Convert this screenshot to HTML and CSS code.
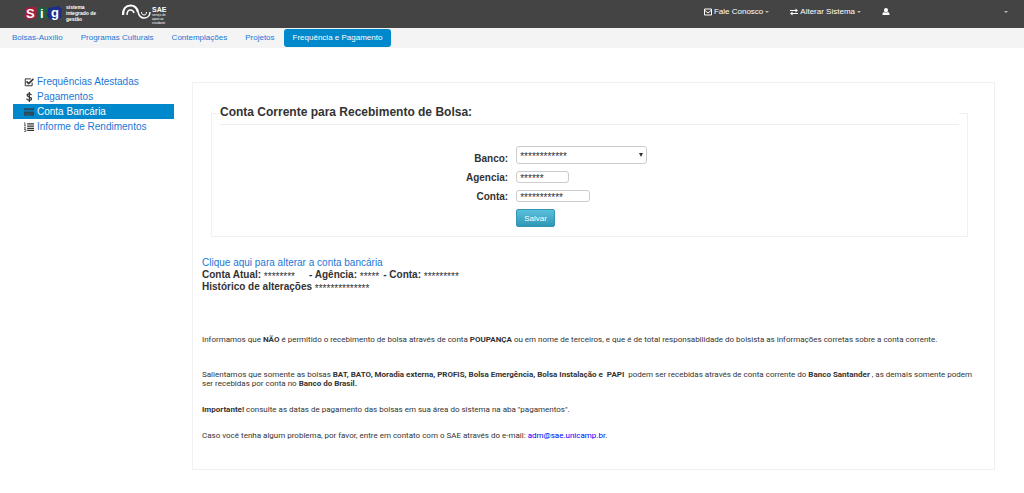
FILE: index.html
```html
<!DOCTYPE html>
<html lang="pt-BR">
<head>
<meta charset="utf-8">
<title>SIG - Conta Bancária</title>
<link rel="stylesheet" href="styles.css">
</head>
<body>
<header class="topbar">
  <a class="brand" href="#">
    <svg class="brand-sig" viewBox="0 0 38 18" role="img" aria-label="SIG">
      <path fill="#a81c3c" d="M1 4L12 2.500l1 4-1 4 1 3-9 2.500L0 12l2-3z"/>
      <path fill="#19633c" d="M13 4l9-1 1 4-1 3 1 4-9 1.500 1-5z"/>
      <path fill="#1c2f8c" d="M24 4l11-2 3 3-1 4 1 4-5 3-8-1-2-4 1-3z"/>
      <text class="sig-letter" x="2" y="14">S</text>
      <text class="sig-letter" x="16" y="14">i</text>
      <text class="sig-letter" x="27" y="13">g</text>
    </svg>
    <span class="brand-text">sistema<br>integrado de<br>gestão</span>
  </a>
  <a class="brand brand-unit" href="#">
    <svg class="brand-sae" viewBox="0 0 30 16" role="img" aria-label="Ondas SAE">
      <g fill="none" stroke="#fff">
        <path stroke-width="2.200" d="M1 11C1 5 4 1.500 8.500 1.500S15 4 16 8"/>
        <path stroke-width="1.500" d="M16 8c1 4 3 6 6 6s6-2 6-6"/>
        <path stroke-width="1.500" d="M5 11C5 7.500 6.500 6 8.500 6s3 1 3.500 3"/>
        <path d="M19.500 8c0 2 1 3 2.500 3s2.500-1 2.500-3"/>
      </g>
    </svg>
    <span class="sae-text"><strong>SAE</strong><small>serviço de<br>apoio ao<br>estudante</small></span>
  </a>
  <nav class="usernav" aria-label="Usuário">
    <a href="#"><svg class="ico" viewBox="0 0 16 16"><path fill="none" stroke="#fff" stroke-width="2" d="M1 2h14v12H1zM2 5l6 5 6-5"/></svg><span>Fale Conosco</span><i class="caret"></i></a>
    <a href="#"><svg class="ico" viewBox="0 0 16 16"><path fill="#fff" d="M0 4h11V1l5 4-5 4V6H0zM16 10H5V7l-5 4 5 4v-3h11z"/></svg><span>Alterar Sistema</span><i class="caret"></i></a>
    <a class="account" href="#" aria-label="Minha conta"><svg class="ico" viewBox="0 0 16 16"><path fill="#fff" d="M8 0c3 0 4 2 4 4.500S10.500 9 8 9 4 7 4 4.500 5 0 8 0zM4 8c1 2 7 2 8 0 3 1 3 4 3 6H1c0-2 0-5 3-6z"/></svg><i class="caret"></i></a>
  </nav>
</header>
<nav class="tabs" aria-label="Principal">
  <a href="#">Bolsas-Auxílio</a>
  <a href="#">Programas Culturais</a>
  <a href="#">Contemplações</a>
  <a href="#">Projetos</a>
  <a class="active" href="#" aria-current="page">Frequência e Pagamento</a>
</nav>
<div class="layout">
  <nav class="side" aria-label="Frequência e Pagamento">
    <a href="#"><svg class="side-ico" viewBox="0 0 16 16"><path fill="none" stroke="#333" stroke-width="1.600" d="M13 9v5H2V3h9"/><path fill="none" stroke="#333" stroke-width="2.600" d="M4 7l3.500 3.500L15 3"/></svg>Frequências Atestadas</a>
    <a href="#"><svg class="side-ico" viewBox="0 0 16 16"><path fill="none" stroke="#333" stroke-width="2" d="M12 5C11 2.500 5 2 5 5c0 3.500 7 2 7 6 0 3-7 3-8-.5M8.500 0v16"/></svg>Pagamentos</a>
    <a class="active" href="#" aria-current="page"><svg class="side-ico" viewBox="0 0 16 16"><path fill="#2d4a5c" d="M0 2h16v3H0zM0 7h16v7H0z"/><path stroke="#0088cc" d="M2 11.500h2M5 11.500h4"/></svg>Conta Bancária</a>
    <a href="#"><svg class="side-ico" viewBox="0 0 16 16"><path fill="none" stroke="#333" stroke-width="2" d="M5 3h11M5 6.500h11M5 10h11M5 13.500h11"/><path fill="none" stroke="#333" stroke-width="1.200" d="M0 1.500h1.500V6M0 6h3M0 9h2.500L.5 12H3v3H0"/></svg>Informe de Rendimentos</a>
  </nav>
  <main class="card">
    <form>
      <fieldset class="account-form">
        <legend>Conta Corrente para Recebimento de Bolsa:</legend>
        <div class="fields">
          <label for="banco">Banco:</label>
          <span class="select"><select id="banco"><option>************</option></select></span>
          <label for="agencia">Agencia:</label>
          <input class="short" id="agencia" type="text" value="******">
          <label for="conta">Conta:</label>
          <input class="medium" id="conta" type="text" value="***********">
          <button type="submit">Salvar</button>
        </div>
      </fieldset>
    </form>
    <section class="summary">
      <a href="#">Clique aqui para alterar a conta bancária</a>
      <div class="current"><span>Conta Atual: <b class="mask">********</b></span><span>- Agência: <b class="mask">*****</b></span><span>- Conta: <b class="mask">*********</b></span></div>
      <div>Histórico de alterações <b class="mask">**************</b></div>
    </section>
    <section class="notes">
      <p class="lead">Informamos que <strong>NÃO</strong> é permitido o recebimento de bolsa através de conta <strong>POUPANÇA</strong> ou em nome de terceiros, e que é de total responsabilidade do bolsista as informações corretas sobre a conta corrente.</p>
      <p>Salientamos que somente as bolsas <strong>BAT, BATO, Moradia externa, PROFIS, Bolsa Emergência, Bolsa Instalação e &nbsp;PAPI</strong> &nbsp;podem ser recebidas através de conta corrente do <strong>Banco Santander</strong> , as demais somente podem ser recebidas por conta no <strong>Banco do Brasil.</strong></p>
      <p><strong>Importante!</strong> consulte as datas de pagamento das bolsas em sua área do sistema na aba "pagamentos".</p>
      <p>Caso você tenha algum problema, por favor, entre em contato com o SAE através do e-mail: <a href="mailto:adm@sae.unicamp.br">adm@sae.unicamp.br</a>.</p>
    </section>
  </main>
</div>
</body>
</html>
```
FILE: styles.css
```css
* { box-sizing: border-box; }
body {
  margin: 0;
  background: #fff;
  color: #333;
  font: 10px/12px "Liberation Sans", Arial, sans-serif;
}
a { color: #1a78d6; text-decoration: none; }

.topbar {
  display: flex;
  align-items: flex-start;
  gap: 26px;
  height: 28px;
  padding: 4px 16px 0 24px;
  background: #444;
}
.brand { display: flex; gap: 4px; color: #fff; }
.brand-unit { gap: 0; }
.brand-sig { width: 38px; height: 18px; }
.sig-letter { fill: #fff; font-size: 13px; font-weight: bold; }
.brand-text { font-size: 5px; line-height: 6px; font-weight: bold; }
.brand-sae { width: 30px; height: 16px; }
.sae-text { display: grid; align-content: start; padding-top: 3px; }
.sae-text strong { font-size: 7px; line-height: 6px; }
.sae-text small { font-size: 3px; line-height: 4px; }

.usernav { display: flex; gap: 21px; margin-left: auto; padding-top: 2px; }
.usernav a {
  display: flex;
  align-items: center;
  gap: 2px;
  color: #fff;
  font-size: 8px;
}
.usernav .account { width: 126px; justify-content: space-between; }
.ico { width: 8px; height: 8px; }
.caret {
  border: 2px solid transparent;
  border-top-color: #bbb;
  border-bottom: 0;
}

.tabs {
  display: flex;
  align-items: center;
  height: 20px;
  padding: 0 3px;
  background: #f4f4f4;
}
.tabs a { padding: 0 9px; font-size: 8px; line-height: 18px; }
.tabs .active { border-radius: 3px; background: #08c; color: #fff; }

.layout {
  display: flex;
  align-items: flex-start;
  gap: 18px;
  padding: 26px 29px 23px 13px;
}
.side { flex: 0 0 161px; }
.side a {
  display: flex;
  align-items: center;
  gap: 3px;
  height: 15px;
  padding-left: 11px;
}
.side .active { background: #08c; color: #fff; }
.side-ico { width: 10px; height: 10px; }

.card {
  flex: 1;
  min-width: 0;
  margin-top: 8px;
  padding: 18px 9px 29px;
  border: 1px solid #f0f0f0;
}
.account-form {
  margin: 0 17px 0 9px;
  padding: 0 8px 9px;
  border: 1px solid #f0f0f0;
}
.account-form legend {
  width: 100%;
  padding: 0;
  border-bottom: 1px solid #eee;
  font-size: 12px;
  line-height: 23px;
  font-weight: bold;
}
.fields {
  display: grid;
  grid-template-columns: 39% 1fr;
  justify-items: start;
  gap: 7px 8px;
  padding-top: 21px;
}
.fields label {
  justify-self: end;
  align-self: end;
  font-weight: bold;
  line-height: 10px;
}
.fields input, .fields select {
  display: block;
  margin: 0;
  border: 1px solid #ccc;
  border-radius: 3px;
  background: #fff;
  color: #333;
  font: 10px/10px "Liberation Sans", Arial, sans-serif;
}
.fields input { height: 12px; padding: 2px 3px 0; }
.short { width: 53px; }
.medium { width: 74px; }
.select { position: relative; width: 131px; }
.select select { width: 100%; height: 18px; padding: 3px 3px 0; appearance: none; }
.select::after {
  content: "";
  position: absolute;
  top: 7px;
  right: 4px;
  border: 2px solid transparent;
  border-top: 4px solid #333;
  border-bottom: 0;
  pointer-events: none;
}
.fields button {
  grid-column: 2;
  height: 18px;
  padding: 0 7px;
  border: 1px solid #2f96b4;
  border-radius: 2px;
  background: linear-gradient(#5bc0de, #2f96b4);
  color: #fff;
  font: 8px "Liberation Sans", Arial, sans-serif;
}

.summary { margin-top: 20px; font-weight: bold; }
.summary a { font-weight: normal; }
.current span { display: inline-block; margin-right: 4px; }
.current span:first-child { margin-right: 14px; }
.mask { font-weight: normal; line-height: 8px; vertical-align: -2px; }

.notes { font: 8px/9px Roboto, "Liberation Sans", Arial, sans-serif; }
.notes p { margin: 0 0 17px; }
.notes .lead { margin: 42px 0 26px; }
.notes a { color: #00f; }
.notes p:last-child { margin-bottom: 0; }
```
